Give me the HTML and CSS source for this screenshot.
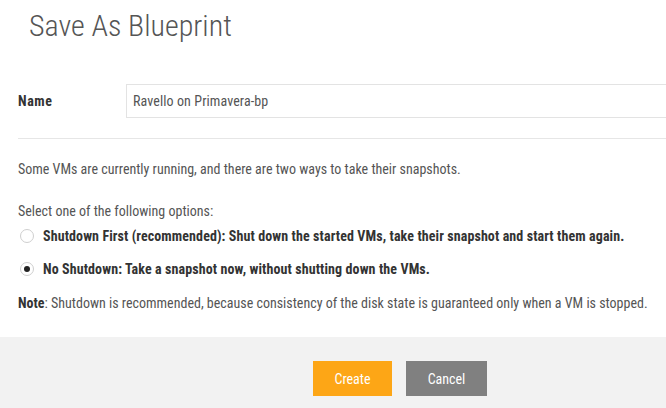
FILE: index.html
```html
<!DOCTYPE html>
<html>
<head>
<meta charset="utf-8">
<link rel="stylesheet" href="styles.css">
</head>
<body>
<div class="dialog">
  <h1 class="title">Save As Blueprint</h1>
  <div class="content">
    <div class="name-row">
      <label class="name-label">Name</label>
      <div class="name-input">Ravello on Primavera-bp</div>
    </div>
    <div class="divider"></div>
    <p class="info">Some VMs are currently running, and there are two ways to take their snapshots.</p>
    <p class="select">Select one of the following options:</p>
    <div class="option">
      <span class="radio"></span>
      <span class="opt-text">Shutdown First (recommended): Shut down the started VMs, take their snapshot and start them again.</span>
    </div>
    <div class="option">
      <span class="radio checked"></span>
      <span class="opt-text">No Shutdown: Take a snapshot now, without shutting down the VMs.</span>
    </div>
    <p class="note"><b>Note</b>: Shutdown is recommended, because consistency of the disk state is guaranteed only when a VM is stopped.</p>
  </div>
  <div class="footer">
    <button class="btn create">Create</button>
    <button class="btn cancel">Cancel</button>
  </div>
</div>
</body>
</html>
```

FILE: styles.css
```css
html, body {
  margin: 0;
  padding: 0;
  background: #fff;
}
body {
  font-family: "Roboto Condensed", Roboto, sans-serif;
  color: #555;
  font-size: 14px;
  overflow: hidden;
}
.dialog {
  width: 666px;
  height: 408px;
  display: flex;
  flex-direction: column;
}
.title {
  margin: 0;
  padding: 8px 0 0 29px;
  height: 42px;
  font-size: 30px;
  font-weight: 300;
  color: #555;
  line-height: 36px;
}
.content {
  padding: 0 0 0 18px;
  flex: 1;
}
.name-row {
  margin-top: 34px;
  display: flex;
  align-items: center;
}
.name-label {
  width: 108px;
  font-weight: bold;
  color: #333;
  font-size: 14px;
  letter-spacing: 0.6px;
}
.name-input {
  flex: 1;
  height: 32px;
  border: 1px solid #e3e3e3;
  border-right: none;
  line-height: 32px;
  padding-left: 6px;
  color: #555;
  letter-spacing: 0.1px;
}
.divider {
  margin-top: 20px;
  height: 1px;
  background: #e6e6e6;
}
.info {
  margin: 22px 0 0;
  line-height: 16px;
}
.select {
  margin: 26px 0 0;
  line-height: 16px;
}
.option {
  display: flex;
  align-items: center;
  height: 33px;
  margin-left: 2px;
}
.radio {
  width: 14px;
  height: 14px;
  border: 1px solid #cfcfcf;
  border-radius: 50%;
  box-sizing: border-box;
  position: relative;
  margin-right: 9px;
  background: #fff;
  flex: none;
}
.radio.checked::after {
  content: "";
  position: absolute;
  left: 3px;
  top: 3px;
  width: 6px;
  height: 6px;
  border-radius: 50%;
  background: #222;
}
.opt-text {
  font-weight: bold;
  color: #333;
  letter-spacing: 0.1px;
  white-space: nowrap;
}
.note {
  margin: 10px 0 0;
  line-height: 16px;
}
.note b {
  color: #333;
}
.footer {
  height: 71px;
  background: #f2f2f2;
  display: flex;
  align-items: flex-start;
  padding-left: 313px;
  gap: 14px;
  box-sizing: border-box;
  padding-top: 24px;
}
.btn {
  height: 35px;
  border: none;
  font-family: inherit;
  font-size: 14px;
  color: #fff;
  padding: 0;
}
.create {
  width: 79px;
  background: #fda616;
}
.cancel {
  width: 81px;
  background: #808080;
}
```
